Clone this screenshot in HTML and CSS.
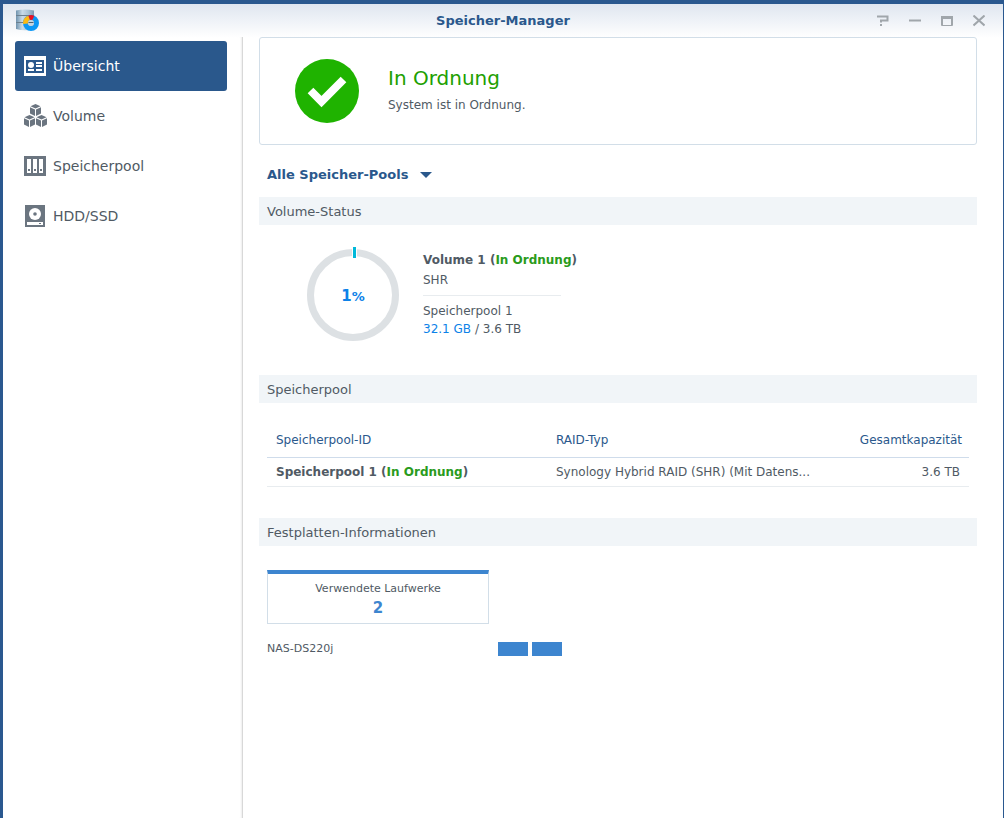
FILE: index.html
```html
<!DOCTYPE html>
<html lang="de">
<head>
<meta charset="utf-8">
<title>Speicher-Manager</title>
<link rel="stylesheet" href="styles.css">
</head>
<body>
<div class="window">
  <header class="titlebar">
    <svg class="app-icon" viewBox="0 0 24 24" aria-hidden="true">
      <defs>
        <linearGradient id="disk" x1="0" x2="1">
          <stop offset="0" stop-color="#6f93ae"/>
          <stop offset=".35" stop-color="#c9dbe8"/>
          <stop offset=".7" stop-color="#a9c2d4"/>
          <stop offset="1" stop-color="#7898b0"/>
        </linearGradient>
      </defs>
      <path fill="url(#disk)" d="M0 1.500q9-2 18 0V20q-9 2.500-18 0z"/>
      <path fill="none" stroke="#6b8090" d="M0 6.500h18M0 13.500h18"/>
      <circle cx="15" cy="14" r="5.500" fill="none" stroke="#0c98f5" stroke-width="5"/>
      <path fill="#fdb913" d="M7 15a8 8 0 0 1 5.500-8.600l1.500 4.600a3 3 0 0 0-2 3.500z"/>
      <path fill="#e81123" d="M12.300 6.500a8 8 0 0 1 6 .2L16.300 11a3 3 0 0 0-2.300 0z"/>
      <circle cx="15" cy="14" r="3" fill="#c3d5e1"/>
      <path fill="#4c6272" d="M12.500 13h5v1h-5z"/>
    </svg>
    <h1 class="title">Speicher-Manager</h1>
    <div class="controls">
      <button class="control" type="button" aria-label="Hilfe"><svg viewBox="0 0 12 12"><path d="M0 1.500h10.500v4H4v2M4 9v2"/></svg></button>
      <button class="control" type="button" aria-label="Minimieren"><svg viewBox="0 0 12 12"><path d="M0 5.500h12"/></svg></button>
      <button class="control" type="button" aria-label="Maximieren"><svg viewBox="0 0 12 12"><path stroke-width="1" d="M.5 1v9.500h11V1M1.500 1v9M10.500 1v9"/><path d="M0 2.500h12" stroke-width="3"/></svg></button>
      <button class="control" type="button" aria-label="Schließen"><svg viewBox="0 0 12 12"><path d="M.5.5l11 10M11.500.5L.5 10.500"/></svg></button>
    </div>
  </header>

  <div class="body">
    <nav class="sidebar">
      <a class="nav-item active" href="#overview">
        <svg class="nav-icon" viewBox="0 0 24 24" aria-hidden="true">
          <path fill="#fff" d="M1 2h22v20H1z"/>
          <path fill="#2a588c" d="M3 6h18v13H3z"/>
          <circle cx="8" cy="11" r="3" fill="#fff"/>
          <path fill="#fff" d="M5 15h6v2H5zM13 8h6v2h-6zM13 11h6v2h-6zM13 15h6v2h-6z"/>
        </svg>
        <span>Übersicht</span>
      </a>
      <a class="nav-item" href="#volume">
        <svg class="nav-icon" viewBox="0 0 24 24" aria-hidden="true">
          <defs>
            <g id="cube">
              <path d="M5.500 0L10.500 2.200 5.500 4.600.5 2.200z"/>
              <path d="M0 3.200l5 2.400V12L0 9.600zM11 3.200L6 5.600V12l5-2.400z"/>
            </g>
          </defs>
          <g fill="#6b7580">
            <use href="#cube" x="7" y="0"/>
            <use href="#cube" x="1" y="11"/>
            <use href="#cube" x="13" y="11"/>
          </g>
        </svg>
        <span>Volume</span>
      </a>
      <a class="nav-item" href="#pool">
        <svg class="nav-icon" viewBox="0 0 24 24" aria-hidden="true">
          <path fill="#6b7580" d="M1 2h22v20H1z"/>
          <path fill="#fff" d="M4 5h4v14H4zM10 5h4v14h-4zM16 5h4v14h-4z"/>
          <path fill="#6b7580" d="M5 15h2v2H5zM11 15h2v2h-2zM17 15h2v2h-2z"/>
        </svg>
        <span>Speicherpool</span>
      </a>
      <a class="nav-item" href="#disks">
        <svg class="nav-icon" viewBox="0 0 24 24" aria-hidden="true">
          <path fill="#6b7580" d="M2 1h20v22H2z"/>
          <circle cx="12" cy="10" r="6" fill="#fff"/>
          <circle cx="12" cy="10" r="1.800" fill="#6b7580"/>
          <path fill="#fff" d="M4 18h16v3H4z"/>
          <path fill="#6b7580" d="M16 19h2v1h-2z"/>
        </svg>
        <span>HDD/SSD</span>
      </a>
    </nav>

    <main class="content">
      <section class="status-card">
        <svg class="status-icon" viewBox="0 0 64 64" aria-hidden="true">
          <circle cx="32" cy="32" r="32" fill="#1fb300"/>
          <path fill="none" stroke="#fff" stroke-width="8" d="M15.500 31.500L26.500 42.500 48.500 20.500"/>
        </svg>
        <div>
          <h2 class="status-title">In Ordnung</h2>
          <p class="status-text">System ist in Ordnung.</p>
        </div>
      </section>

      <button class="pool-filter" type="button">Alle Speicher-Pools <span class="caret"></span></button>

      <section>
        <h3 class="section-title">Volume-Status</h3>
        <div class="volume">
          <div class="gauge">
            <svg class="gauge-ring" viewBox="0 0 96 96" aria-hidden="true">
              <circle cx="48" cy="49" r="42.500" fill="none" stroke="#dde1e4" stroke-width="7"/>
              <path fill="#fff" d="M47 1h5v11h-5z"/>
              <path fill="#00b8d9" d="M48 1h3v11h-3z"/>
            </svg>
            <span class="gauge-value">1<small class="gauge-unit">%</small></span>
          </div>
          <div class="volume-info">
            <p class="volume-name">Volume 1 (<span class="ok">In Ordnung</span>)</p>
            <p class="volume-type">SHR</p>
            <p class="volume-line">Speicherpool 1</p>
            <p class="volume-line"><span class="used">32.1 GB</span> / 3.6 TB</p>
          </div>
        </div>
      </section>

      <section>
        <h3 class="section-title">Speicherpool</h3>
        <div class="table-wrap">
          <table class="pools">
            <thead>
              <tr><th class="col-id">Speicherpool-ID</th><th class="col-type">RAID-Typ</th><th class="number">Gesamtkapazität</th></tr>
            </thead>
            <tbody>
              <tr><td class="pool-name">Speicherpool 1 (<span class="ok">In Ordnung</span>)</td><td>Synology Hybrid RAID (SHR) (Mit Datens...</td><td class="number">3.6 TB</td></tr>
            </tbody>
          </table>
        </div>
      </section>

      <section>
        <h3 class="section-title">Festplatten-Informationen</h3>
        <div class="disks">
          <div class="disk-card">
            <span>Verwendete Laufwerke</span>
            <strong class="disk-count">2</strong>
          </div>
          <div class="device">
            <span class="device-name">NAS-DS220j</span>
            <span class="bay"></span>
            <span class="bay"></span>
          </div>
        </div>
      </section>
    </main>
  </div>
</div>
</body>
</html>
```

FILE: styles.css
```css
* {
  box-sizing: border-box;
}

body {
  margin: 0;
  background: #2a588f;
  color: #505a64;
  font: 12px/18px Verdana, "DejaVu Sans", sans-serif;
}

h1, h2, h3, p {
  margin: 0;
}

button {
  border: 0;
  padding: 0;
  background: none;
  font: inherit;
}

.window {
  display: flex;
  flex-direction: column;
  min-height: 100vh;
  border: solid #2a588f;
  border-width: 4px 1px 0 3px;
  background: linear-gradient(#dfe6f0, #fff 34px) #fff;
}

.titlebar {
  display: grid;
  grid-template-columns: 1fr auto 1fr;
  align-items: center;
  height: 33px;
  padding: 0 13px;
}

.app-icon {
  width: 24px;
  height: 24px;
}

.title {
  color: #2a588c;
  font-size: 13px;
  line-height: 18px;
}

.controls {
  display: flex;
  justify-content: flex-end;
  gap: 20px;
  padding-right: 5px;
}

.control {
  display: flex;
}

.control svg {
  width: 12px;
  height: 12px;
  fill: none;
  stroke: #a0a6ab;
  stroke-width: 2;
}

.body {
  display: flex;
  flex: 1;
}

.sidebar {
  flex: 0 0 240px;
  padding: 4px 15px 0 12px;
  border-right: 1px solid #d8d8d8;
  box-shadow: inset -2px 0 2px -1px #eee;
}

.nav-item {
  display: flex;
  align-items: center;
  gap: 6px;
  height: 50px;
  padding: 0 8px;
  border-radius: 3px;
  color: #505a64;
  font-size: 14px;
  text-decoration: none;
}

.nav-item.active {
  background: #2a588c;
  color: #fff;
}

.nav-icon {
  width: 24px;
  height: 24px;
}

.content {
  flex: 1;
  min-width: 0;
  padding: 0 26px 24px 16px;
}

.status-card {
  display: flex;
  align-items: center;
  gap: 29px;
  height: 108px;
  padding: 0 35px;
  border: 1px solid #d2dee8;
  border-radius: 3px;
  background: #fff;
}

.status-icon {
  width: 64px;
  height: 64px;
}

.status-title {
  color: #21a000;
  font-size: 20px;
  font-weight: normal;
  line-height: 28px;
}

.status-text {
  line-height: 26px;
}

.pool-filter {
  display: flex;
  align-items: center;
  gap: 12px;
  height: 28px;
  margin: 16px 0 8px;
  padding: 0 8px;
  color: #2a588c;
  font-size: 13px;
  font-weight: bold;
}

.caret {
  border: 6px solid transparent;
  border-top-color: #2a588c;
  border-bottom: 0;
}

.section-title {
  padding: 2px 8px 0;
  background: #f1f5f8;
  font-size: 13px;
  font-weight: normal;
  line-height: 26px;
}

.volume {
  display: flex;
  gap: 22px;
  height: 150px;
  padding: 21px 46px;
}

.gauge {
  display: grid;
  width: 96px;
  height: 96px;
}

.gauge-ring,
.gauge-value {
  grid-area: 1 / 1;
}

.gauge-value {
  place-self: center;
  padding-top: 4px;
  color: #0d82e8;
  font-size: 15px;
  font-weight: bold;
}

.gauge-unit {
  font-size: 13px;
}

.volume-name {
  padding-top: 4px;
  font-size: 12px;
  font-weight: bold;
  line-height: 20px;
}

.volume-type {
  width: 138px;
  margin-bottom: 6px;
  padding: 1px 0 6px;
  border-bottom: 1px solid #e8ecef;
}

.volume-line {
  line-height: 18px;
}

.ok {
  color: #2a9b1c;
}

.used {
  color: #0d82e8;
}

.table-wrap {
  padding: 18px 8px 31px;
}

.pools {
  width: 100%;
  border-collapse: collapse;
  table-layout: fixed;
}

.pools th {
  height: 36px;
  padding: 2px 7px 0 9px;
  border-bottom: 1px solid #cfdceb;
  color: #2a588c;
  font-weight: normal;
  text-align: left;
}

.pools td {
  height: 29px;
  padding: 0 9px;
  border-bottom: 1px solid #e8ecef;
  white-space: nowrap;
}

.pools .number {
  text-align: right;
}

.pools .col-id,
.pools .col-type {
  width: 280px;
}

.pools .pool-name {
  font-weight: bold;
}

.disks {
  padding: 24px 8px;
  font-size: 11px;
}

.disk-card {
  display: flex;
  flex-direction: column;
  align-items: center;
  width: 222px;
  height: 54px;
  padding-top: 6px;
  border: 1px solid #d2dee8;
  border-top: 4px solid #3d85cf;
}

.disk-count {
  color: #3d85cf;
  font-size: 15px;
  line-height: 20px;
}

.device {
  display: flex;
  align-items: center;
  gap: 4px;
  margin-top: 16px;
}

.device-name {
  width: 227px;
}

.bay {
  width: 30px;
  height: 14px;
  background: #3d85cf;
}
```
